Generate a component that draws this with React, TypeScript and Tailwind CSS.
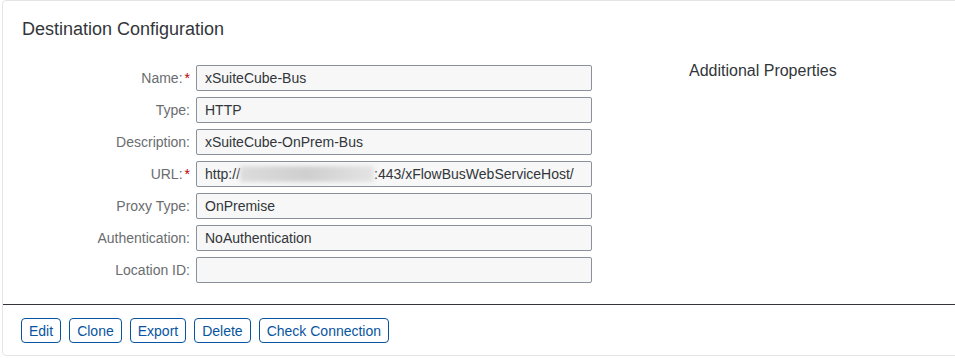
import React from "react";

const rows: { label: string; required?: boolean; value?: string; url?: boolean }[] = [
  { label: "Name:", required: true, value: "xSuiteCube-Bus" },
  { label: "Type:", value: "HTTP" },
  { label: "Description:", value: "xSuiteCube-OnPrem-Bus" },
  { label: "URL:", required: true, url: true },
  { label: "Proxy Type:", value: "OnPremise" },
  { label: "Authentication:", value: "NoAuthentication" },
  { label: "Location ID:", value: "" },
];

const actions = ["Edit", "Clone", "Export", "Delete", "Check Connection"];

export default function App() {
  return (
    <div className="w-[955px] h-[358px] overflow-hidden bg-white font-['Liberation_Sans',Arial,sans-serif] text-[#32363a]">
      <div className="ml-[2px] mr-[-40px] h-[356px] border border-[#e5e5e5] rounded-[4px] flex flex-col">
        <h1 className="pl-[19px] pt-[16px] text-[18px] leading-[24px] font-normal">Destination Configuration</h1>

        {/* form + side column */}
        <div className="flex mt-[24px] h-[220px]">
          <div className="flex flex-col gap-[6px]">
            {rows.map((r) => (
              <div key={r.label} className="flex items-center h-[26px]">
                <div className="w-[193px] pr-[6px] text-right text-[14px] text-[#6a6d70] whitespace-nowrap">
                  {r.label}
                  {r.required && <span className="text-[#bb0000] ml-[2px]">*</span>}
                </div>
                <div className="w-[396px] h-[26px] bg-[#f7f7f7] border border-[#89919a] rounded-[2px] px-[8px] flex items-center text-[14px] whitespace-nowrap overflow-hidden">
                  {r.url ? (
                    <>
                      <span>http://</span>
                      <span className="inline-block w-[134px] h-[16px] bg-gradient-to-r from-[#dcdcdc] via-[#cfcfcf] to-[#e4e4e4] blur-[2px]" />
                      <span>:443/xFlowBusWebServiceHost/</span>
                    </>
                  ) : (
                    r.value
                  )}
                </div>
              </div>
            ))}
          </div>
          <div className="pl-[97px] mt-[-3px] text-[16px] leading-[18px] whitespace-nowrap">Additional Properties</div>
        </div>

        <div className="mt-[19px] border-t border-[#32363a]" />

        <div className="flex gap-[8px] pl-[18px] pt-[13px]">
          {actions.map((a) => (
            <button
              key={a}
              className="h-[25px] px-[7px] border border-[#0854a0] rounded-[4px] text-[14px] text-[#0854a0] bg-white leading-none"
            >
              {a}
            </button>
          ))}
        </div>
      </div>
    </div>
  );
}
